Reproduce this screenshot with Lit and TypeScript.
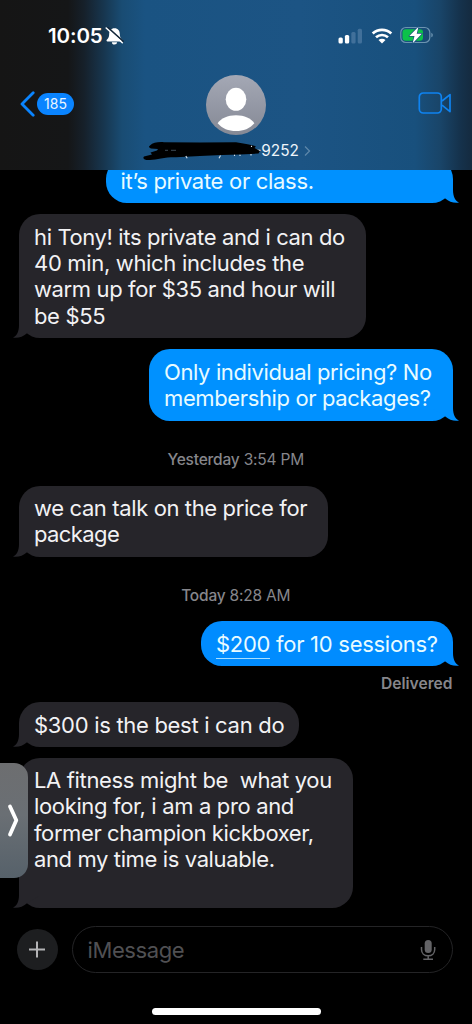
import { LitElement, html, svg, css, nothing } from 'lit';
import { customElement, property } from 'lit/decorators.js';

interface Line {
  text: string;
  spacing: number;
  link?: string;
}

const line = (text: string, spacing = -0.38, link?: string): Line => ({ text, spacing, link });

@customElement('im-bubble')
export class ImBubble extends LitElement {
  @property({ attribute: false }) lines: Line[] = [];
  @property({ type: Boolean, reflect: true }) out = false;

  static styles = css`
    :host {
      --fill: #26252a;
      display: block;
      position: relative;
      isolation: isolate;
      align-self: flex-start;
      box-sizing: border-box;
      flex: none;
      padding: 9.500px 0 8.500px 15px;
      border-radius: 21px;
      background: var(--fill);
      color: #f2f2f4;
      font-size: 22px;
      line-height: 26.400px;
    }
    :host([out]) {
      --fill: #0091ff;
      align-self: flex-end;
      color: #e8fbff;
    }
    .line {
      display: block;
      white-space: pre;
    }
    .link {
      padding-bottom: 1px;
      border-bottom: 1px solid #a9e0ff;
    }
    .tail {
      display: block;
      position: absolute;
      z-index: -1;
      bottom: 0;
      left: -6px;
      width: 26px;
      height: 22px;
      fill: var(--fill);
      transform: scaleX(-1);
    }
    :host([out]) .tail {
      left: auto;
      right: -6px;
      transform: none;
    }
  `;

  render() {
    return html`
      <svg class="tail" viewBox="0 0 26 22">
        <path d="M0 0H20V9C20 15 22 20 26 21.600C21 22.300 16 21 12.300 17.600L0 10Z" />
      </svg>
      ${this.lines.map(
        (l) =>
          html`<span class="line" style=${`letter-spacing:${l.spacing}px`}>${l.link
            ? html`<span class="link">${l.link}</span>`
            : nothing}${l.text}</span>`,
      )}
    `;
  }
}

const bellSlash = svg`
  <path d="M9.500 1.200C6 1.200 4.200 3.800 4.200 7C4.200 10.200 3.200 11.300 1.800 12.800C1.200 13.600 1.600 14.400 2.400 14.400H16.600C17.400 14.400 17.800 13.600 17.200 12.800C15.800 11.300 14.800 10.200 14.800 7C14.800 3.800 13 1.200 9.500 1.200ZM6.900 15.300A2.600 2.300 0 0 0 12.100 15.300Z" fill="#fff" />
  <path d="M2.600 .3L18.600 14.700" stroke="#15283a" stroke-width="1.700" />
  <path d="M1.200 1L17.300 15.800" stroke="#fff" stroke-width="1.500" stroke-linecap="round" />
`;

@customElement('app-root')
export class AppRoot extends LitElement {
  static styles = css`
    :host {
      display: flex;
      flex-direction: column;
      position: relative;
      width: 472px;
      height: 1024px;
      overflow: hidden;
      background: #000;
      font-family: Inter, 'Liberation Sans', sans-serif;
    }
    svg {
      display: block;
      flex: none;
    }
    .header {
      height: 170px;
      box-sizing: border-box;
      flex: none;
      display: flex;
      flex-direction: column;
      background: linear-gradient(
        90deg,
        #151515 0,
        #151617 68px,
        #16202a 84px,
        #17364f 104px,
        #194c73 122px,
        #1a5382 145px,
        #1c5484 300px,
        #18507d 415px,
        #194569 440px,
        #15324c 460px,
        #142a3f 472px
      );
    }
    .status {
      display: flex;
      align-items: center;
      height: 21px;
      margin-top: 25px;
      padding-left: 48px;
      color: #fff;
    }
    .clock {
      width: 57px;
      font-size: 20.500px;
      line-height: 21px;
      font-weight: 600;
      letter-spacing: -0.1px;
    }
    .signal {
      margin-left: 214px;
    }
    .wifi {
      margin-left: 8px;
    }
    .battery {
      margin-left: 7px;
      margin-top: -1px;
    }
    .nav {
      display: flex;
      align-items: center;
      height: 60px;
      margin-top: 29px;
      padding-left: 20px;
    }
    .badge {
      width: 37px;
      height: 22px;
      margin-left: 2px;
      border-radius: 11px;
      background: #0a84ff;
      color: #e9f5ff;
      font-size: 14px;
      line-height: 22px;
      text-align: center;
    }
    .back {
      display: flex;
      align-items: center;
      width: 186px;
      margin-top: -3px;
    }
    .video {
      margin-left: 152px;
      margin-top: -4px;
    }
    .contact {
      position: relative;
      display: flex;
      align-items: center;
      height: 20px;
      margin-top: 6px;
      padding-left: 164px;
      color: #eef4fa;
      font-size: 15.400px;
      line-height: 20px;
    }
    .number {
      width: 135px;
      text-align: right;
    }
    .more {
      margin-left: 5px;
    }
    .marker {
      position: absolute;
      left: 138px;
      top: -5px;
    }
    .thread {
      display: flex;
      flex-direction: column;
      height: 738px;
      padding: 0 19.500px 0 19px;
      overflow: hidden;
    }
    .b1 {
      width: 347px;
      height: 45px;
      margin-top: -12px;
    }
    .b2 {
      width: 346.500px;
      height: 124px;
      margin-top: 11px;
    }
    .b3 {
      width: 303.500px;
      height: 71.500px;
      margin-top: 11px;
    }
    .b4 {
      width: 308.500px;
      height: 71px;
      margin-top: 16px;
    }
    .b5 {
      --fill: #008cff;
      width: 251.500px;
      height: 45px;
      margin-top: 15.500px;
    }
    .b6 {
      width: 280px;
      height: 45px;
      margin-top: 8px;
    }
    .b7 {
      width: 334px;
      height: 150.500px;
      margin-top: 10.500px;
    }
    .stamp {
      height: 20px;
      margin-top: 29px;
      color: #86868b;
      font-size: 15.500px;
      line-height: 20px;
      text-align: center;
      letter-spacing: -0.2px;
    }
    .stamp b {
      font-weight: 500;
    }
    .delivered {
      height: 20px;
      margin-top: 8px;
      color: #86868b;
      font-size: 15.600px;
      font-weight: 600;
      line-height: 20px;
      text-align: right;
    }
    .composer {
      display: flex;
      align-items: center;
      height: 47px;
      margin-top: 18px;
      padding: 0 19.500px 0 17px;
    }
    .field {
      flex: 1;
      display: flex;
      align-items: center;
      justify-content: space-between;
      box-sizing: border-box;
      height: 47px;
      margin-left: 14px;
      padding: 0 16px 0 14.500px;
      border: 1.500px solid #242426;
      border-radius: 24px;
      color: #505053;
      font-size: 22px;
      letter-spacing: -0.4px;
    }
    .home {
      width: 169px;
      height: 7px;
      margin: 35px 0 0 152px;
      border-radius: 4px;
      background: #fff;
    }
    .drawer {
      position: absolute;
      left: 0;
      top: 763px;
      width: 28px;
      height: 115px;
      border-radius: 0 14px 14px 0;
      background: linear-gradient(#6d6e70, #6a6f74 45%, #56616a);
    }
  `;

  private _status() {
    return html`
      <div class="status">
        <div class="clock">10:05</div>
        <svg width="19" height="18" viewBox="0 0 19 18">${bellSlash}</svg>
        <svg class="signal" width="25" height="16" viewBox="0 0 25 16">
          <rect x=".5" y="9.500" width="4.300" height="6" rx="1.500" fill="#fff" />
          <rect x="6.900" y="7" width="4.300" height="8.500" rx="1.500" fill="#fff" />
          <rect x="13.300" y="4" width="4.300" height="11.500" rx="1.500" fill="#41709a" />
          <rect x="19.700" y=".7" width="4.300" height="14.800" rx="1.500" fill="#41709a" />
        </svg>
        <svg class="wifi" width="22" height="16" viewBox="0 0 22 16" fill="none" stroke="#fff">
          <path d="M1.700 5.500C7 .7 15 .7 20.300 5.500" stroke-width="2.800" />
          <path d="M5 9.300C8.500 6.200 13.500 6.200 17 9.300" stroke-width="2.700" />
          <path d="M11 15.500L7.500 12.100C9.500 10.300 12.500 10.300 14.500 12.100Z" fill="#fff" stroke="none" />
        </svg>
        <svg class="battery" width="34" height="18" viewBox="0 0 34 18">
          <rect x=".8" y="1.500" width="29" height="15" rx="5" fill="none" stroke="#6c93b0" stroke-width="1.200" />
          <path d="M31.300 6.700C33.300 7.500 33.300 10.500 31.300 11.300Z" fill="#6c93b0" />
          <rect x="2.500" y="3.200" width="20.500" height="11.600" rx="3.300" fill="#0cc24a" />
          <path
            d="M18.500 .8L9.300 10H14.500L12.700 17.200L21.800 7.800H16.700Z"
            fill="#fff"
            stroke="#1a5280"
            stroke-width="1.400"
            paint-order="stroke"
            stroke-linejoin="round"
          />
        </svg>
      </div>
    `;
  }

  private _nav() {
    return html`
      <div class="nav">
        <div class="back">
          <svg width="15" height="26" viewBox="0 0 15 26">
            <path
              d="M13.200 1.800L2 13L13.200 24.200"
              fill="none"
              stroke="#0a84ff"
              stroke-width="2.800"
              stroke-linecap="round"
              stroke-linejoin="round"
            />
          </svg>
          <div class="badge">185</div>
        </div>
        <svg width="60" height="60" viewBox="0 0 60 60">
          <defs>
            <linearGradient id="face" x2="0" y2="1">
              <stop stop-color="#a4a8b5" />
              <stop offset="1" stop-color="#858995" />
            </linearGradient>
          </defs>
          <circle cx="30" cy="30" r="30" fill="url(#face)" />
          <ellipse cx="30" cy="24.300" rx="10.300" ry="11.500" fill="#fff" />
          <path
            d="M11.600 48.200C15 43.200 21.500 40.200 30 40.200S45 43.200 48.400 48.200C43.800 53.500 37.500 56 30 56S16.200 53.500 11.600 48.200Z"
            fill="#fff"
          />
        </svg>
        <svg class="video" width="34" height="22" viewBox="0 0 34 22" fill="none" stroke="#0f83f0" stroke-width="1.700">
          <rect x="1.300" y="1" width="22" height="20" rx="4" />
          <path d="M24 9L32 2.600V19.600L24 13.200" stroke-linejoin="round" />
        </svg>
      </div>
    `;
  }

  private _contact() {
    return html`
      <div class="contact">
        <div class="number">-9252</div>
        <svg class="more" width="7" height="12" viewBox="0 0 7 12">
          <path d="M1 1.500L5.500 6L1 10.500" fill="none" stroke="#5d86a9" stroke-width="1.300" />
        </svg>
        <svg class="marker" width="124" height="30" viewBox="138 136 124 30">
          <path
            d="M150 145.500C153 142.500 158 141.800 164 142.200L200 142.500L236 142.200C244 143.500 252 144.500 256 146.500L254.500 148L260 151L258.500 153.500L240 154.500L222 155L200 156L176 157.200C165 157 157 159.500 150 160C145 160.500 142 158.500 144 156.500L152 154.500L150.500 152.500L157 150.500L158 149L151 148.500C148.500 147.500 148.500 146.500 150 145.500Z"
            fill="#000"
          />
          <path
            d="M185.800 156L187.200 158.200M220.500 155.500L219 158.200M234.500 154.800V156M240 154.800V156M251.500 145.800V147M251 154V155.500"
            fill="none"
            stroke="#dbe6ef"
            stroke-width="1.100"
          />
          <path d="M165 150.300H168M171 150.300H176" stroke="#3c4a56" stroke-width="1" />
        </svg>
      </div>
    `;
  }

  render() {
    return html`
      <div class="header">${this._status()} ${this._nav()} ${this._contact()}</div>
      <div class="thread">
        <im-bubble class="b1" out .lines=${[line('it’s private or class.', -0.3)]}></im-bubble>
        <im-bubble
          class="b2"
          .lines=${[
            line('hi Tony! its private and i can do'),
            line('40 min, which includes the', -0.33),
            line('warm up for $35 and hour will'),
            line('be $55', -0.35),
          ]}
        ></im-bubble>
        <im-bubble
          class="b3"
          out
          .lines=${[line('Only individual pricing? No'), line('membership or packages?')]}
        ></im-bubble>
        <div class="stamp"><b>Yesterday</b> 3:54 PM</div>
        <im-bubble class="b4" .lines=${[line('we can talk on the price for'), line('package', -0.6)]}></im-bubble>
        <div class="stamp"><b>Today</b> 8:28 AM</div>
        <im-bubble class="b5" out .lines=${[line(' for 10 sessions?', -0.28, '$200')]}></im-bubble>
        <div class="delivered">Delivered</div>
        <im-bubble class="b6" .lines=${[line('$300 is the best i can do', -0.3)]}></im-bubble>
        <im-bubble
          class="b7"
          .lines=${[
            line('LA fitness might be  what you', -0.34),
            line('looking for, i am a pro and', -0.35),
            line('former champion kickboxer,', -0.4),
            line('and my time is valuable.'),
          ]}
        ></im-bubble>
      </div>
      <div class="composer">
        <svg width="41" height="41" viewBox="0 0 41 41">
          <circle cx="20.500" cy="20.500" r="20.500" fill="#1d1e20" />
          <path d="M20 12.500V28.500M12 20.500H28" stroke="#b4b4b6" stroke-width="2" />
        </svg>
        <div class="field">
          <span>iMessage</span>
          <svg width="16" height="22" viewBox="0 0 16 22">
            <rect x="4.700" y="1" width="7" height="13" rx="3.500" fill="#636366" />
            <path
              d="M1.500 8V10.500C1.500 14.500 4.500 16.800 8.200 16.800S14.700 14.500 14.700 10.500V8M8.200 17V20M3.300 20.200H13"
              fill="none"
              stroke="#636366"
              stroke-width="1.500"
            />
          </svg>
        </div>
      </div>
      <div class="home"></div>
      <div class="drawer">
        <svg width="28" height="115" viewBox="0 0 28 115">
          <path
            d="M10 43.500L16.300 57.300L10 71.500"
            fill="none"
            stroke="#fff"
            stroke-width="3.800"
            stroke-linecap="round"
            stroke-linejoin="round"
          />
        </svg>
      </div>
    `;
  }
}
